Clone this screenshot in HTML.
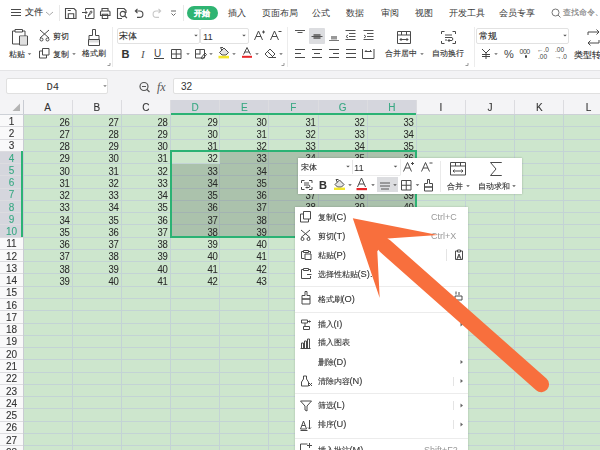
<!DOCTYPE html><html><head><meta charset="utf-8"><style>
*{box-sizing:border-box;margin:0;padding:0}
html,body{width:600px;height:450px;overflow:hidden;background:#fff;font-family:"Liberation Sans",sans-serif;color:#333}
.a{position:absolute}
.t{position:absolute;white-space:nowrap;line-height:1;-webkit-text-stroke:0.1px currentColor}
svg{position:absolute;overflow:visible}
</style></head><body><div style="position:absolute;left:0;top:0;width:600px;height:450px;overflow:hidden;filter:blur(0.45px)"><div class="a" style="left:0px;top:0px;width:600px;height:70px;background:#fff;"></div><div class="a" style="left:0px;top:70px;width:600px;height:30px;background:#f3f3f5;"></div><div class="a" style="left:0px;top:69.5px;width:600px;height:1px;background:#e4e4e6;"></div><div class="a" style="left:5.5px;top:78.2px;width:102px;height:16px;background:#fff;border:1px solid #e0e0e0;border-radius:2px"></div><div class="a" style="left:173px;top:78.2px;width:430px;height:16px;background:#fff;border:1px solid #e0e0e0;border-radius:2px"></div><div class="t" style="left:46.5px;top:82.3px;font-size:10.5px;color:#333;font-family:'Liberation Mono',monospace;-webkit-text-stroke:0">D4</div><div class="t" style="left:181px;top:82px;font-size:10px;color:#333;-webkit-text-stroke:0">32</div><div class="t" style="left:24.5px;top:8px;font-size:9px;color:#333;">文件</div><div class="a" style="left:187px;top:6px;width:31px;height:14px;background:#2fb472;border-radius:7px"></div><div class="t" style="left:194px;top:8.8px;font-size:8.3px;color:#fff;font-weight:bold">开始</div><div class="t" style="left:228px;top:8.9px;font-size:8.6px;color:#3a3a3a;-webkit-text-stroke:0">插入</div><div class="t" style="left:262px;top:8.9px;font-size:8.6px;color:#3a3a3a;-webkit-text-stroke:0">页面布局</div><div class="t" style="left:312px;top:8.9px;font-size:8.6px;color:#3a3a3a;-webkit-text-stroke:0">公式</div><div class="t" style="left:346px;top:8.9px;font-size:8.6px;color:#3a3a3a;-webkit-text-stroke:0">数据</div><div class="t" style="left:381px;top:8.9px;font-size:8.6px;color:#3a3a3a;-webkit-text-stroke:0">审阅</div><div class="t" style="left:415px;top:8.9px;font-size:8.6px;color:#3a3a3a;-webkit-text-stroke:0">视图</div><div class="t" style="left:449px;top:8.9px;font-size:8.6px;color:#3a3a3a;-webkit-text-stroke:0">开发工具</div><div class="t" style="left:499px;top:8.9px;font-size:8.6px;color:#3a3a3a;-webkit-text-stroke:0">会员专享</div><div class="t" style="left:563px;top:9.3px;font-size:8.1px;color:#7a7a7a;-webkit-text-stroke:0.1px #7a7a7a">查找命令、</div><svg style="left:0;top:0" width="600" height="30"><path d="M555.5 12.5m-3.5 0a3.5 3.5 0 1 0 7 0a3.5 3.5 0 1 0-7 0M558 15l2.5 2.5" fill="none" stroke="#777" stroke-width="1"/></svg><div class="t" style="left:9px;top:50.3px;font-size:8.3px;color:#2b2b2b;">粘贴</div><div class="t" style="left:52.8px;top:32px;font-size:8.3px;color:#2b2b2b;">剪切</div><div class="t" style="left:52.8px;top:49.5px;font-size:8.3px;color:#2b2b2b;">复制</div><div class="t" style="left:82px;top:50.3px;font-size:8.2px;color:#2b2b2b;">格式刷</div><div class="a" style="left:117px;top:27.5px;width:83px;height:16px;background:#fff;border:1px solid #e2e2e2;border-radius:2px"></div><div class="a" style="left:200px;top:27.5px;width:48.5px;height:16px;background:#fff;border:1px solid #e2e2e2;border-radius:2px"></div><div class="t" style="left:119px;top:31.5px;font-size:8.5px;color:#2b2b2b;">宋体</div><div class="t" style="left:203px;top:31.5px;font-size:9.5px;color:#333;-webkit-text-stroke:0">11</div><div class="t" style="left:385px;top:50.3px;font-size:8.2px;color:#2b2b2b;">合并居中</div><div class="t" style="left:432px;top:50.3px;font-size:8.2px;color:#2b2b2b;">自动换行</div><div class="a" style="left:476px;top:27.5px;width:93px;height:16px;background:#fff;border:1px solid #e2e2e2;border-radius:2px"></div><div class="t" style="left:479px;top:31.5px;font-size:8.5px;color:#2b2b2b;">常规</div><div class="t" style="left:574px;top:51px;font-size:8.5px;color:#2b2b2b;">类型转换</div><div class="a" style="left:309px;top:27.5px;width:16px;height:16.5px;background:#dcdde0;border-radius:1px"></div><svg style="left:0;top:0" width="600" height="100" viewBox="0 0 600 100" fill="none" stroke="#4a4a4a" stroke-width="1"><path d="M11 9.5h10M11 12.5h10M11 15.5h10" /><path d="M46 12l3.5 3 3.5-3" stroke="#aaa"/><path d="M59.5 5v16M183.5 5v16" stroke="#e8e8e8"/><path d="M65.5 8.5h8.5l2 2v8h-10.5z M67.8 10.5h3 M68.3 18.5v-4.8h5.4v4.8" stroke-width="1.1"/><path d="M85.5 10.5v-2h8.5v10h-8.5v-3.5 M82 12.5h5 M85.5 11l1.5 1.5-1.5 1.5 M88.3 16.5c0-2.2 3.7-2.5 3.7-4.5c0-1.3-1.8-1.3-1.8 0c0 1.5-1.9 1.8-1.9 4.5" /><path d="M102 11v-2.5h6v2.5 M101.5 11h7.5a1 1 0 0 1 1 1v3.5h-9.5v-3.5a1 1 0 0 1 1-1z M102.3 14.2h5.4v4.3h-5.4z" stroke-width="1.1"/><path d="M122 18.5h-4.5v-10h6.5l2 2v2.5 M122.8 14m-2.6 0a2.6 2.6 0 1 0 5.2 0a2.6 2.6 0 1 0-5.2 0 M124.8 16l2.2 2.2" stroke-width="1.1"/><path d="M137.5 8.8l-2.2 2.2 2.2 2.2 M135.5 11h4.2a3.2 3.2 0 0 1 0 6.4h-2.7" stroke-width="1.1"/><path d="M158.5 8.8l2.2 2.2-2.2 2.2 M160.5 11h-4.2a3.2 3.2 0 0 0 0 6.4h2.7" stroke="#c8c8c8" stroke-width="1.1"/><path d="M171 11h5 M171.5 13.5l2 2 2-2" stroke="#666"/><path d="M12.5 31h2.5M22.5 31h2.5v5 M12.5 31v13h6.5 M15 29.5h7.5v2.5h-7.5z M19.5 36h8v9h-8z" /><rect x="20" y="36.5" width="7" height="8" fill="#e0e0e0" stroke="none"/><path d="M27.7 53.3l1.8 1.8 1.8-1.8z" fill="#666" stroke="none"/><path d="M40 30l9 8 M49 30l-9 8 M41.5 39.5m-1.5 0a1.5 1.5 0 1 0 3 0a1.5 1.5 0 1 0-3 0 M47.5 39.5m-1.5 0a1.5 1.5 0 1 0 3 0a1.5 1.5 0 1 0-3 0" /><path d="M42.5 48.5h6.5v6.5h-6.5z M42.5 51h-3v7h7v-3" /><path d="M72.2 53.3l1.8 1.8 1.8-1.8z" fill="#666" stroke="none"/><path d="M92.5 29.5h3v6h3.5v4h-10v-4h3.5z M88.5 39.5h11v6h-11z" /><rect x="89" y="40" width="10" height="2.5" fill="#ddd" stroke="none"/><path d="M107.5 65.5h2.5v-2.5" stroke="#999"/><path d="M281.5 65.5h2.5v-2.5" stroke="#999"/><path d="M465.5 65.5h2.5v-2.5" stroke="#999"/><path d="M112.5 27v40M287.5 27v40M474.5 27v40" stroke="#ececec"/><path d="M194.2 34.8l1.8 1.8 1.8-1.8z M242.2 34.8l1.8 1.8 1.8-1.8z M563.2 34.8l1.8 1.8 1.8-1.8z" fill="#555" stroke="none"/><path d="M254.5 40l4-9 4 9 M256 36.5h5 M262 32h3M263.5 30.5v3" /><path d="M270.5 40l4-9 4 9 M272 36.5h5 M278.5 31.5h3" /><path d="M171.5 49.5h9.5v9h-9.5z M176.25 49.5v9 M171.5 54h9.5" /><path d="M195.5 49.5h9v8.5h-9z M195.5 54h4.5 M200 49.5v5 M201 58l4-5 1.5 1.5-4 4.5z" /><path d="M219.5 52.5l4.5-4.5 4.5 4.5-2.5 2.5h-4z" fill="#e4e4e4"/><path d="M221.8 50.2l-1.3-2.7h2.5" /><rect x="218.5" y="55.8" width="10.5" height="2.6" fill="#f3e62b" stroke="none"/><path d="M243.5 54.5l3.5-7 3.5 7 M244.7 52h4.6" /><rect x="242" y="55.8" width="10" height="2" fill="#e8262a" stroke="none"/><path d="M265 54l5-5 5 5-3.5 3.5h-3z M267.5 51.5l5 5 M269 57.5h7" /><path d="M186.2 53.3l1.8 1.8 1.8-1.8z" fill="#666" stroke="none"/><path d="M209.2 53.3l1.8 1.8 1.8-1.8z" fill="#666" stroke="none"/><path d="M232.2 53.3l1.8 1.8 1.8-1.8z" fill="#666" stroke="none"/><path d="M255.2 53.3l1.8 1.8 1.8-1.8z" fill="#666" stroke="none"/><path d="M279.2 53.3l1.8 1.8 1.8-1.8z" fill="#666" stroke="none"/><path d="M295 30.5h10M297.5 32.5h5" stroke="#555"/><rect x="313.5" y="34" width="7" height="5" fill="#777" stroke="none"/><path d="M311.5 36.5h11" stroke="#555"/><rect x="331" y="36" width="6" height="3.5" fill="#999" stroke="none"/><path d="M329 40.5h10" stroke="#777"/><path d="M345.5 30.5h10M349 33.5h6.5M349 36.5h6.5M345.5 39.5h10 M348 35l-2 1.5 2 1.5" stroke="#555"/><path d="M363.5 30.5h10M367 33.5h6.5M367 36.5h6.5M363.5 39.5h10 M364 35l2 1.5-2 1.5" stroke="#555"/><path d="M295 49.5h10M295 53.5h6M295 57.5h10" /><path d="M312 49.5h10M314 53.5h6M312 57.5h10" /><path d="M329 49.5h10M333 53.5h6M329 57.5h10" /><path d="M346 49.5h10M346 53.5h10M346 57.5h10" /><path d="M362.5 49v9.5h11.5V49 M365 51.5h6.5 M365 51.5l1.5-1.5M371.5 51.5l-1.5-1.5" /><path d="M397.5 31.5h13v12h-13z M397.5 35h13 M401.5 31.5v3.5M406.5 31.5v3.5 M400 39.5h8 M401.5 38l-1.5 1.5 1.5 1.5M406.5 38l1.5 1.5-1.5 1.5" /><path d="M420.2 53.3l1.8 1.8 1.8-1.8z" fill="#666" stroke="none"/><path d="M441.5 34v-2.5h3 M452.5 31.5h3v2.5 M441.5 41v2.5h3 M452.5 43.5h3v-2.5 M445 35h7 M445 37.5h7c1 0 1 3 0 3h-4 M449.5 39l-1.5 1.5 1.5 1.5 M445 40h2" /><path d="M482 49l4 4 4-4 M486 53v6 M482 54.5h8 M482 56.5h8" stroke="#444"/><path d="M494.2 53.3l1.8 1.8 1.8-1.8z" fill="#666" stroke="none"/><path d="M588 35v-3h11 M596.5 29.5l2.5 2.5-2.5 2.5 M599 40v3h-11 M590.5 45.5l-2.5-2.5 2.5-2.5" /><path d="M144 86.5m-4 0a4 4 0 1 0 8 0a4 4 0 1 0-8 0 M147 89.5l2.5 2.5 M142 86.5h4" stroke="#555" stroke-width="1.2"/><path d="M103.2 85.3l1.8 1.8 1.8-1.8z" fill="#777" stroke="none"/></svg><div class="t" style="left:121.5px;top:49px;font-size:11px;color:#333;font-weight:bold">B</div><div class="t" style="left:141px;top:49px;font-size:11px;color:#555;font-style:italic;font-family:'Liberation Serif',serif;-webkit-text-stroke:0">I</div><div class="t" style="left:154px;top:48.5px;font-size:10px;color:#444;-webkit-text-stroke:0">U</div><div class="a" style="left:154px;top:58px;width:10px;height:1px;background:#444;"></div><div class="t" style="left:504px;top:49px;font-size:11px;color:#444;-webkit-text-stroke:0">%</div><div class="a" style="left:525.3px;top:54.5px;width:1.3px;height:3px;background:#444;border-radius:1px"></div><div class="t" style="left:519.5px;top:47.5px;font-size:7px;color:#444;letter-spacing:-0.5px;-webkit-text-stroke:0">000</div><div class="t" style="left:537px;top:47px;font-size:6.5px;color:#444;-webkit-text-stroke:0">←.0</div><div class="t" style="left:538px;top:53.5px;font-size:6.5px;color:#444;-webkit-text-stroke:0">.00</div><div class="t" style="left:555px;top:47px;font-size:6.5px;color:#444;-webkit-text-stroke:0">.00</div><div class="t" style="left:555px;top:53.5px;font-size:6.5px;color:#444;-webkit-text-stroke:0">→.0</div><div class="t" style="left:157px;top:81px;font-size:12px;color:#555;font-family:'Liberation Serif',serif;-webkit-text-stroke:0"><i>fx</i></div><div class="a" style="left:0px;top:99.5px;width:600px;height:15.2px;background:#f4f4f6;"></div><div class="a" style="left:0px;top:114.7px;width:23px;height:340px;background:#f9f9fa;"></div><div class="a" style="left:23px;top:114.7px;width:580px;height:340px;background:#cde6cd;"></div><div class="a" style="left:170.51px;top:99.5px;width:245.85000000000002px;height:15.2px;background:#d5d6dd;"></div><div class="a" style="left:0px;top:151.38px;width:23px;height:85.82px;background:#d5d6dd;"></div><div class="a" style="left:22.50px;top:99.5px;width:1px;height:15.2px;background:#dcdce0"></div><div class="a" style="left:22.50px;top:114.7px;width:1px;height:340px;background:#c3d3d5"></div><div class="a" style="left:71.67px;top:99.5px;width:1px;height:15.2px;background:#dcdce0"></div><div class="a" style="left:71.67px;top:114.7px;width:1px;height:340px;background:#c3d3d5"></div><div class="a" style="left:120.84px;top:99.5px;width:1px;height:15.2px;background:#dcdce0"></div><div class="a" style="left:120.84px;top:114.7px;width:1px;height:340px;background:#c3d3d5"></div><div class="a" style="left:170.01px;top:99.5px;width:1px;height:15.2px;background:#dcdce0"></div><div class="a" style="left:170.01px;top:114.7px;width:1px;height:340px;background:#c3d3d5"></div><div class="a" style="left:219.18px;top:99.5px;width:1px;height:15.2px;background:#dcdce0"></div><div class="a" style="left:219.18px;top:114.7px;width:1px;height:340px;background:#c3d3d5"></div><div class="a" style="left:268.35px;top:99.5px;width:1px;height:15.2px;background:#dcdce0"></div><div class="a" style="left:268.35px;top:114.7px;width:1px;height:340px;background:#c3d3d5"></div><div class="a" style="left:317.52px;top:99.5px;width:1px;height:15.2px;background:#dcdce0"></div><div class="a" style="left:317.52px;top:114.7px;width:1px;height:340px;background:#c3d3d5"></div><div class="a" style="left:366.69px;top:99.5px;width:1px;height:15.2px;background:#dcdce0"></div><div class="a" style="left:366.69px;top:114.7px;width:1px;height:340px;background:#c3d3d5"></div><div class="a" style="left:415.86px;top:99.5px;width:1px;height:15.2px;background:#dcdce0"></div><div class="a" style="left:415.86px;top:114.7px;width:1px;height:340px;background:#c3d3d5"></div><div class="a" style="left:465.03px;top:99.5px;width:1px;height:15.2px;background:#dcdce0"></div><div class="a" style="left:465.03px;top:114.7px;width:1px;height:340px;background:#c3d3d5"></div><div class="a" style="left:514.20px;top:99.5px;width:1px;height:15.2px;background:#dcdce0"></div><div class="a" style="left:514.20px;top:114.7px;width:1px;height:340px;background:#c3d3d5"></div><div class="a" style="left:563.37px;top:99.5px;width:1px;height:15.2px;background:#dcdce0"></div><div class="a" style="left:563.37px;top:114.7px;width:1px;height:340px;background:#c3d3d5"></div><div class="a" style="left:612.54px;top:99.5px;width:1px;height:15.2px;background:#dcdce0"></div><div class="a" style="left:612.54px;top:114.7px;width:1px;height:340px;background:#c3d3d5"></div><div class="a" style="left:23px;top:114.10px;width:580px;height:1px;background:#c3d3d5"></div><div class="a" style="left:0px;top:114.10px;width:23px;height:1px;background:#dcdce0"></div><div class="a" style="left:23px;top:126.36px;width:580px;height:1px;background:#c3d3d5"></div><div class="a" style="left:0px;top:126.36px;width:23px;height:1px;background:#dcdce0"></div><div class="a" style="left:23px;top:138.62px;width:580px;height:1px;background:#c3d3d5"></div><div class="a" style="left:0px;top:138.62px;width:23px;height:1px;background:#dcdce0"></div><div class="a" style="left:23px;top:150.88px;width:580px;height:1px;background:#c3d3d5"></div><div class="a" style="left:0px;top:150.88px;width:23px;height:1px;background:#dcdce0"></div><div class="a" style="left:23px;top:163.14px;width:580px;height:1px;background:#c3d3d5"></div><div class="a" style="left:0px;top:163.14px;width:23px;height:1px;background:#dcdce0"></div><div class="a" style="left:23px;top:175.40px;width:580px;height:1px;background:#c3d3d5"></div><div class="a" style="left:0px;top:175.40px;width:23px;height:1px;background:#dcdce0"></div><div class="a" style="left:23px;top:187.66px;width:580px;height:1px;background:#c3d3d5"></div><div class="a" style="left:0px;top:187.66px;width:23px;height:1px;background:#dcdce0"></div><div class="a" style="left:23px;top:199.92px;width:580px;height:1px;background:#c3d3d5"></div><div class="a" style="left:0px;top:199.92px;width:23px;height:1px;background:#dcdce0"></div><div class="a" style="left:23px;top:212.18px;width:580px;height:1px;background:#c3d3d5"></div><div class="a" style="left:0px;top:212.18px;width:23px;height:1px;background:#dcdce0"></div><div class="a" style="left:23px;top:224.44px;width:580px;height:1px;background:#c3d3d5"></div><div class="a" style="left:0px;top:224.44px;width:23px;height:1px;background:#dcdce0"></div><div class="a" style="left:23px;top:236.70px;width:580px;height:1px;background:#c3d3d5"></div><div class="a" style="left:0px;top:236.70px;width:23px;height:1px;background:#dcdce0"></div><div class="a" style="left:23px;top:248.96px;width:580px;height:1px;background:#c3d3d5"></div><div class="a" style="left:0px;top:248.96px;width:23px;height:1px;background:#dcdce0"></div><div class="a" style="left:23px;top:261.22px;width:580px;height:1px;background:#c3d3d5"></div><div class="a" style="left:0px;top:261.22px;width:23px;height:1px;background:#dcdce0"></div><div class="a" style="left:23px;top:273.48px;width:580px;height:1px;background:#c3d3d5"></div><div class="a" style="left:0px;top:273.48px;width:23px;height:1px;background:#dcdce0"></div><div class="a" style="left:23px;top:285.74px;width:580px;height:1px;background:#c3d3d5"></div><div class="a" style="left:0px;top:285.74px;width:23px;height:1px;background:#dcdce0"></div><div class="a" style="left:23px;top:298.00px;width:580px;height:1px;background:#c3d3d5"></div><div class="a" style="left:0px;top:298.00px;width:23px;height:1px;background:#dcdce0"></div><div class="a" style="left:23px;top:310.26px;width:580px;height:1px;background:#c3d3d5"></div><div class="a" style="left:0px;top:310.26px;width:23px;height:1px;background:#dcdce0"></div><div class="a" style="left:23px;top:322.52px;width:580px;height:1px;background:#c3d3d5"></div><div class="a" style="left:0px;top:322.52px;width:23px;height:1px;background:#dcdce0"></div><div class="a" style="left:23px;top:334.78px;width:580px;height:1px;background:#c3d3d5"></div><div class="a" style="left:0px;top:334.78px;width:23px;height:1px;background:#dcdce0"></div><div class="a" style="left:23px;top:347.04px;width:580px;height:1px;background:#c3d3d5"></div><div class="a" style="left:0px;top:347.04px;width:23px;height:1px;background:#dcdce0"></div><div class="a" style="left:23px;top:359.30px;width:580px;height:1px;background:#c3d3d5"></div><div class="a" style="left:0px;top:359.30px;width:23px;height:1px;background:#dcdce0"></div><div class="a" style="left:23px;top:371.56px;width:580px;height:1px;background:#c3d3d5"></div><div class="a" style="left:0px;top:371.56px;width:23px;height:1px;background:#dcdce0"></div><div class="a" style="left:23px;top:383.82px;width:580px;height:1px;background:#c3d3d5"></div><div class="a" style="left:0px;top:383.82px;width:23px;height:1px;background:#dcdce0"></div><div class="a" style="left:23px;top:396.08px;width:580px;height:1px;background:#c3d3d5"></div><div class="a" style="left:0px;top:396.08px;width:23px;height:1px;background:#dcdce0"></div><div class="a" style="left:23px;top:408.34px;width:580px;height:1px;background:#c3d3d5"></div><div class="a" style="left:0px;top:408.34px;width:23px;height:1px;background:#dcdce0"></div><div class="a" style="left:23px;top:420.60px;width:580px;height:1px;background:#c3d3d5"></div><div class="a" style="left:0px;top:420.60px;width:23px;height:1px;background:#dcdce0"></div><div class="a" style="left:23px;top:432.86px;width:580px;height:1px;background:#c3d3d5"></div><div class="a" style="left:0px;top:432.86px;width:23px;height:1px;background:#dcdce0"></div><div class="a" style="left:23px;top:445.12px;width:580px;height:1px;background:#c3d3d5"></div><div class="a" style="left:0px;top:445.12px;width:23px;height:1px;background:#dcdce0"></div><div class="a" style="left:23px;top:457.38px;width:580px;height:1px;background:#c3d3d5"></div><div class="a" style="left:0px;top:457.38px;width:23px;height:1px;background:#dcdce0"></div><div class="a" style="left:219.68px;top:151.38px;width:196.68px;height:12.259999999999991px;background:rgba(50,70,55,0.22);"></div><div class="a" style="left:170.51px;top:163.64px;width:245.85000000000002px;height:73.56px;background:rgba(50,70,55,0.22);"></div><div class="a" style="left:22.5px;top:99.5px;width:1px;height:360px;background:#c9ccd3;"></div><div class="a" style="left:0px;top:114.2px;width:600px;height:1px;background:#cdd1d7;"></div><svg style="left:0;top:0" width="30" height="120"><path d="M12.5 111h7.5v-7.5z" fill="#b4b4b4"/></svg><div class="t" style="left:23.00px;top:103px;width:49.17px;text-align:center;font-size:10px;color:#333">A</div><div class="t" style="left:72.17px;top:103px;width:49.17px;text-align:center;font-size:10px;color:#333">B</div><div class="t" style="left:121.34px;top:103px;width:49.17px;text-align:center;font-size:10px;color:#333">C</div><div class="t" style="left:170.51px;top:103px;width:49.17px;text-align:center;font-size:10px;color:#38a883">D</div><div class="t" style="left:219.68px;top:103px;width:49.17px;text-align:center;font-size:10px;color:#38a883">E</div><div class="t" style="left:268.85px;top:103px;width:49.17px;text-align:center;font-size:10px;color:#38a883">F</div><div class="t" style="left:318.02px;top:103px;width:49.17px;text-align:center;font-size:10px;color:#38a883">G</div><div class="t" style="left:367.19px;top:103px;width:49.17px;text-align:center;font-size:10px;color:#38a883">H</div><div class="t" style="left:416.36px;top:103px;width:49.17px;text-align:center;font-size:10px;color:#333">I</div><div class="t" style="left:465.53px;top:103px;width:49.17px;text-align:center;font-size:10px;color:#333">J</div><div class="t" style="left:514.70px;top:103px;width:49.17px;text-align:center;font-size:10px;color:#333">K</div><div class="t" style="left:563.87px;top:103px;width:49.17px;text-align:center;font-size:10px;color:#333">L</div><div class="t" style="left:0;top:116.80px;width:23px;text-align:center;font-size:10px;color:#333">1</div><div class="t" style="left:0;top:129.06px;width:23px;text-align:center;font-size:10px;color:#333">2</div><div class="t" style="left:0;top:141.32px;width:23px;text-align:center;font-size:10px;color:#333">3</div><div class="t" style="left:0;top:153.58px;width:23px;text-align:center;font-size:10px;color:#38a883">4</div><div class="t" style="left:0;top:165.84px;width:23px;text-align:center;font-size:10px;color:#38a883">5</div><div class="t" style="left:0;top:178.10px;width:23px;text-align:center;font-size:10px;color:#38a883">6</div><div class="t" style="left:0;top:190.36px;width:23px;text-align:center;font-size:10px;color:#38a883">7</div><div class="t" style="left:0;top:202.62px;width:23px;text-align:center;font-size:10px;color:#38a883">8</div><div class="t" style="left:0;top:214.88px;width:23px;text-align:center;font-size:10px;color:#38a883">9</div><div class="t" style="left:0;top:227.14px;width:23px;text-align:center;font-size:10px;color:#38a883">10</div><div class="t" style="left:0;top:239.40px;width:23px;text-align:center;font-size:10px;color:#333">11</div><div class="t" style="left:0;top:251.66px;width:23px;text-align:center;font-size:10px;color:#333">12</div><div class="t" style="left:0;top:263.92px;width:23px;text-align:center;font-size:10px;color:#333">13</div><div class="t" style="left:0;top:276.18px;width:23px;text-align:center;font-size:10px;color:#333">14</div><div class="t" style="left:0;top:288.44px;width:23px;text-align:center;font-size:10px;color:#333">15</div><div class="t" style="left:0;top:300.70px;width:23px;text-align:center;font-size:10px;color:#333">16</div><div class="t" style="left:0;top:312.96px;width:23px;text-align:center;font-size:10px;color:#333">17</div><div class="t" style="left:0;top:325.22px;width:23px;text-align:center;font-size:10px;color:#333">18</div><div class="t" style="left:0;top:337.48px;width:23px;text-align:center;font-size:10px;color:#333">19</div><div class="t" style="left:0;top:349.74px;width:23px;text-align:center;font-size:10px;color:#333">20</div><div class="t" style="left:0;top:362.00px;width:23px;text-align:center;font-size:10px;color:#333">21</div><div class="t" style="left:0;top:374.26px;width:23px;text-align:center;font-size:10px;color:#333">22</div><div class="t" style="left:0;top:386.52px;width:23px;text-align:center;font-size:10px;color:#333">23</div><div class="t" style="left:0;top:398.78px;width:23px;text-align:center;font-size:10px;color:#333">24</div><div class="t" style="left:0;top:411.04px;width:23px;text-align:center;font-size:10px;color:#333">25</div><div class="t" style="left:0;top:423.30px;width:23px;text-align:center;font-size:10px;color:#333">26</div><div class="t" style="left:0;top:435.56px;width:23px;text-align:center;font-size:10px;color:#333">27</div><div class="t" style="left:0;top:447.82px;width:23px;text-align:center;font-size:10px;color:#333">28</div><div class="t" style="left:23.00px;top:116.60px;width:46.67px;text-align:right;font-size:10.6px;transform:scaleX(0.9);transform-origin:100% 0;color:#2a2a2a;letter-spacing:-0.2px;-webkit-text-stroke:0.05px currentColor">26</div><div class="t" style="left:72.17px;top:116.60px;width:46.67px;text-align:right;font-size:10.6px;transform:scaleX(0.9);transform-origin:100% 0;color:#2a2a2a;letter-spacing:-0.2px;-webkit-text-stroke:0.05px currentColor">27</div><div class="t" style="left:121.34px;top:116.60px;width:46.67px;text-align:right;font-size:10.6px;transform:scaleX(0.9);transform-origin:100% 0;color:#2a2a2a;letter-spacing:-0.2px;-webkit-text-stroke:0.05px currentColor">28</div><div class="t" style="left:170.51px;top:116.60px;width:46.67px;text-align:right;font-size:10.6px;transform:scaleX(0.9);transform-origin:100% 0;color:#2a2a2a;letter-spacing:-0.2px;-webkit-text-stroke:0.05px currentColor">29</div><div class="t" style="left:219.68px;top:116.60px;width:46.67px;text-align:right;font-size:10.6px;transform:scaleX(0.9);transform-origin:100% 0;color:#2a2a2a;letter-spacing:-0.2px;-webkit-text-stroke:0.05px currentColor">30</div><div class="t" style="left:268.85px;top:116.60px;width:46.67px;text-align:right;font-size:10.6px;transform:scaleX(0.9);transform-origin:100% 0;color:#2a2a2a;letter-spacing:-0.2px;-webkit-text-stroke:0.05px currentColor">31</div><div class="t" style="left:318.02px;top:116.60px;width:46.67px;text-align:right;font-size:10.6px;transform:scaleX(0.9);transform-origin:100% 0;color:#2a2a2a;letter-spacing:-0.2px;-webkit-text-stroke:0.05px currentColor">32</div><div class="t" style="left:367.19px;top:116.60px;width:46.67px;text-align:right;font-size:10.6px;transform:scaleX(0.9);transform-origin:100% 0;color:#2a2a2a;letter-spacing:-0.2px;-webkit-text-stroke:0.05px currentColor">33</div><div class="t" style="left:23.00px;top:128.86px;width:46.67px;text-align:right;font-size:10.6px;transform:scaleX(0.9);transform-origin:100% 0;color:#2a2a2a;letter-spacing:-0.2px;-webkit-text-stroke:0.05px currentColor">27</div><div class="t" style="left:72.17px;top:128.86px;width:46.67px;text-align:right;font-size:10.6px;transform:scaleX(0.9);transform-origin:100% 0;color:#2a2a2a;letter-spacing:-0.2px;-webkit-text-stroke:0.05px currentColor">28</div><div class="t" style="left:121.34px;top:128.86px;width:46.67px;text-align:right;font-size:10.6px;transform:scaleX(0.9);transform-origin:100% 0;color:#2a2a2a;letter-spacing:-0.2px;-webkit-text-stroke:0.05px currentColor">29</div><div class="t" style="left:170.51px;top:128.86px;width:46.67px;text-align:right;font-size:10.6px;transform:scaleX(0.9);transform-origin:100% 0;color:#2a2a2a;letter-spacing:-0.2px;-webkit-text-stroke:0.05px currentColor">30</div><div class="t" style="left:219.68px;top:128.86px;width:46.67px;text-align:right;font-size:10.6px;transform:scaleX(0.9);transform-origin:100% 0;color:#2a2a2a;letter-spacing:-0.2px;-webkit-text-stroke:0.05px currentColor">31</div><div class="t" style="left:268.85px;top:128.86px;width:46.67px;text-align:right;font-size:10.6px;transform:scaleX(0.9);transform-origin:100% 0;color:#2a2a2a;letter-spacing:-0.2px;-webkit-text-stroke:0.05px currentColor">32</div><div class="t" style="left:318.02px;top:128.86px;width:46.67px;text-align:right;font-size:10.6px;transform:scaleX(0.9);transform-origin:100% 0;color:#2a2a2a;letter-spacing:-0.2px;-webkit-text-stroke:0.05px currentColor">33</div><div class="t" style="left:367.19px;top:128.86px;width:46.67px;text-align:right;font-size:10.6px;transform:scaleX(0.9);transform-origin:100% 0;color:#2a2a2a;letter-spacing:-0.2px;-webkit-text-stroke:0.05px currentColor">34</div><div class="t" style="left:23.00px;top:141.12px;width:46.67px;text-align:right;font-size:10.6px;transform:scaleX(0.9);transform-origin:100% 0;color:#2a2a2a;letter-spacing:-0.2px;-webkit-text-stroke:0.05px currentColor">28</div><div class="t" style="left:72.17px;top:141.12px;width:46.67px;text-align:right;font-size:10.6px;transform:scaleX(0.9);transform-origin:100% 0;color:#2a2a2a;letter-spacing:-0.2px;-webkit-text-stroke:0.05px currentColor">29</div><div class="t" style="left:121.34px;top:141.12px;width:46.67px;text-align:right;font-size:10.6px;transform:scaleX(0.9);transform-origin:100% 0;color:#2a2a2a;letter-spacing:-0.2px;-webkit-text-stroke:0.05px currentColor">30</div><div class="t" style="left:170.51px;top:141.12px;width:46.67px;text-align:right;font-size:10.6px;transform:scaleX(0.9);transform-origin:100% 0;color:#2a2a2a;letter-spacing:-0.2px;-webkit-text-stroke:0.05px currentColor">31</div><div class="t" style="left:219.68px;top:141.12px;width:46.67px;text-align:right;font-size:10.6px;transform:scaleX(0.9);transform-origin:100% 0;color:#2a2a2a;letter-spacing:-0.2px;-webkit-text-stroke:0.05px currentColor">32</div><div class="t" style="left:268.85px;top:141.12px;width:46.67px;text-align:right;font-size:10.6px;transform:scaleX(0.9);transform-origin:100% 0;color:#2a2a2a;letter-spacing:-0.2px;-webkit-text-stroke:0.05px currentColor">33</div><div class="t" style="left:318.02px;top:141.12px;width:46.67px;text-align:right;font-size:10.6px;transform:scaleX(0.9);transform-origin:100% 0;color:#2a2a2a;letter-spacing:-0.2px;-webkit-text-stroke:0.05px currentColor">34</div><div class="t" style="left:367.19px;top:141.12px;width:46.67px;text-align:right;font-size:10.6px;transform:scaleX(0.9);transform-origin:100% 0;color:#2a2a2a;letter-spacing:-0.2px;-webkit-text-stroke:0.05px currentColor">35</div><div class="t" style="left:23.00px;top:153.38px;width:46.67px;text-align:right;font-size:10.6px;transform:scaleX(0.9);transform-origin:100% 0;color:#2a2a2a;letter-spacing:-0.2px;-webkit-text-stroke:0.05px currentColor">29</div><div class="t" style="left:72.17px;top:153.38px;width:46.67px;text-align:right;font-size:10.6px;transform:scaleX(0.9);transform-origin:100% 0;color:#2a2a2a;letter-spacing:-0.2px;-webkit-text-stroke:0.05px currentColor">30</div><div class="t" style="left:121.34px;top:153.38px;width:46.67px;text-align:right;font-size:10.6px;transform:scaleX(0.9);transform-origin:100% 0;color:#2a2a2a;letter-spacing:-0.2px;-webkit-text-stroke:0.05px currentColor">31</div><div class="t" style="left:170.51px;top:153.38px;width:46.67px;text-align:right;font-size:10.6px;transform:scaleX(0.9);transform-origin:100% 0;color:#2a2a2a;letter-spacing:-0.2px;-webkit-text-stroke:0.05px currentColor">32</div><div class="t" style="left:219.68px;top:153.38px;width:46.67px;text-align:right;font-size:10.6px;transform:scaleX(0.9);transform-origin:100% 0;color:#2a2a2a;letter-spacing:-0.2px;-webkit-text-stroke:0.05px currentColor">33</div><div class="t" style="left:268.85px;top:153.38px;width:46.67px;text-align:right;font-size:10.6px;transform:scaleX(0.9);transform-origin:100% 0;color:#2a2a2a;letter-spacing:-0.2px;-webkit-text-stroke:0.05px currentColor">34</div><div class="t" style="left:318.02px;top:153.38px;width:46.67px;text-align:right;font-size:10.6px;transform:scaleX(0.9);transform-origin:100% 0;color:#2a2a2a;letter-spacing:-0.2px;-webkit-text-stroke:0.05px currentColor">35</div><div class="t" style="left:367.19px;top:153.38px;width:46.67px;text-align:right;font-size:10.6px;transform:scaleX(0.9);transform-origin:100% 0;color:#2a2a2a;letter-spacing:-0.2px;-webkit-text-stroke:0.05px currentColor">36</div><div class="t" style="left:23.00px;top:165.64px;width:46.67px;text-align:right;font-size:10.6px;transform:scaleX(0.9);transform-origin:100% 0;color:#2a2a2a;letter-spacing:-0.2px;-webkit-text-stroke:0.05px currentColor">30</div><div class="t" style="left:72.17px;top:165.64px;width:46.67px;text-align:right;font-size:10.6px;transform:scaleX(0.9);transform-origin:100% 0;color:#2a2a2a;letter-spacing:-0.2px;-webkit-text-stroke:0.05px currentColor">31</div><div class="t" style="left:121.34px;top:165.64px;width:46.67px;text-align:right;font-size:10.6px;transform:scaleX(0.9);transform-origin:100% 0;color:#2a2a2a;letter-spacing:-0.2px;-webkit-text-stroke:0.05px currentColor">32</div><div class="t" style="left:170.51px;top:165.64px;width:46.67px;text-align:right;font-size:10.6px;transform:scaleX(0.9);transform-origin:100% 0;color:#2a2a2a;letter-spacing:-0.2px;-webkit-text-stroke:0.05px currentColor">33</div><div class="t" style="left:219.68px;top:165.64px;width:46.67px;text-align:right;font-size:10.6px;transform:scaleX(0.9);transform-origin:100% 0;color:#2a2a2a;letter-spacing:-0.2px;-webkit-text-stroke:0.05px currentColor">34</div><div class="t" style="left:268.85px;top:165.64px;width:46.67px;text-align:right;font-size:10.6px;transform:scaleX(0.9);transform-origin:100% 0;color:#2a2a2a;letter-spacing:-0.2px;-webkit-text-stroke:0.05px currentColor">35</div><div class="t" style="left:318.02px;top:165.64px;width:46.67px;text-align:right;font-size:10.6px;transform:scaleX(0.9);transform-origin:100% 0;color:#2a2a2a;letter-spacing:-0.2px;-webkit-text-stroke:0.05px currentColor">36</div><div class="t" style="left:367.19px;top:165.64px;width:46.67px;text-align:right;font-size:10.6px;transform:scaleX(0.9);transform-origin:100% 0;color:#2a2a2a;letter-spacing:-0.2px;-webkit-text-stroke:0.05px currentColor">37</div><div class="t" style="left:23.00px;top:177.90px;width:46.67px;text-align:right;font-size:10.6px;transform:scaleX(0.9);transform-origin:100% 0;color:#2a2a2a;letter-spacing:-0.2px;-webkit-text-stroke:0.05px currentColor">31</div><div class="t" style="left:72.17px;top:177.90px;width:46.67px;text-align:right;font-size:10.6px;transform:scaleX(0.9);transform-origin:100% 0;color:#2a2a2a;letter-spacing:-0.2px;-webkit-text-stroke:0.05px currentColor">32</div><div class="t" style="left:121.34px;top:177.90px;width:46.67px;text-align:right;font-size:10.6px;transform:scaleX(0.9);transform-origin:100% 0;color:#2a2a2a;letter-spacing:-0.2px;-webkit-text-stroke:0.05px currentColor">33</div><div class="t" style="left:170.51px;top:177.90px;width:46.67px;text-align:right;font-size:10.6px;transform:scaleX(0.9);transform-origin:100% 0;color:#2a2a2a;letter-spacing:-0.2px;-webkit-text-stroke:0.05px currentColor">34</div><div class="t" style="left:219.68px;top:177.90px;width:46.67px;text-align:right;font-size:10.6px;transform:scaleX(0.9);transform-origin:100% 0;color:#2a2a2a;letter-spacing:-0.2px;-webkit-text-stroke:0.05px currentColor">35</div><div class="t" style="left:268.85px;top:177.90px;width:46.67px;text-align:right;font-size:10.6px;transform:scaleX(0.9);transform-origin:100% 0;color:#2a2a2a;letter-spacing:-0.2px;-webkit-text-stroke:0.05px currentColor">36</div><div class="t" style="left:318.02px;top:177.90px;width:46.67px;text-align:right;font-size:10.6px;transform:scaleX(0.9);transform-origin:100% 0;color:#2a2a2a;letter-spacing:-0.2px;-webkit-text-stroke:0.05px currentColor">37</div><div class="t" style="left:367.19px;top:177.90px;width:46.67px;text-align:right;font-size:10.6px;transform:scaleX(0.9);transform-origin:100% 0;color:#2a2a2a;letter-spacing:-0.2px;-webkit-text-stroke:0.05px currentColor">38</div><div class="t" style="left:23.00px;top:190.16px;width:46.67px;text-align:right;font-size:10.6px;transform:scaleX(0.9);transform-origin:100% 0;color:#2a2a2a;letter-spacing:-0.2px;-webkit-text-stroke:0.05px currentColor">32</div><div class="t" style="left:72.17px;top:190.16px;width:46.67px;text-align:right;font-size:10.6px;transform:scaleX(0.9);transform-origin:100% 0;color:#2a2a2a;letter-spacing:-0.2px;-webkit-text-stroke:0.05px currentColor">33</div><div class="t" style="left:121.34px;top:190.16px;width:46.67px;text-align:right;font-size:10.6px;transform:scaleX(0.9);transform-origin:100% 0;color:#2a2a2a;letter-spacing:-0.2px;-webkit-text-stroke:0.05px currentColor">34</div><div class="t" style="left:170.51px;top:190.16px;width:46.67px;text-align:right;font-size:10.6px;transform:scaleX(0.9);transform-origin:100% 0;color:#2a2a2a;letter-spacing:-0.2px;-webkit-text-stroke:0.05px currentColor">35</div><div class="t" style="left:219.68px;top:190.16px;width:46.67px;text-align:right;font-size:10.6px;transform:scaleX(0.9);transform-origin:100% 0;color:#2a2a2a;letter-spacing:-0.2px;-webkit-text-stroke:0.05px currentColor">36</div><div class="t" style="left:268.85px;top:190.16px;width:46.67px;text-align:right;font-size:10.6px;transform:scaleX(0.9);transform-origin:100% 0;color:#2a2a2a;letter-spacing:-0.2px;-webkit-text-stroke:0.05px currentColor">37</div><div class="t" style="left:318.02px;top:190.16px;width:46.67px;text-align:right;font-size:10.6px;transform:scaleX(0.9);transform-origin:100% 0;color:#2a2a2a;letter-spacing:-0.2px;-webkit-text-stroke:0.05px currentColor">38</div><div class="t" style="left:367.19px;top:190.16px;width:46.67px;text-align:right;font-size:10.6px;transform:scaleX(0.9);transform-origin:100% 0;color:#2a2a2a;letter-spacing:-0.2px;-webkit-text-stroke:0.05px currentColor">39</div><div class="t" style="left:23.00px;top:202.42px;width:46.67px;text-align:right;font-size:10.6px;transform:scaleX(0.9);transform-origin:100% 0;color:#2a2a2a;letter-spacing:-0.2px;-webkit-text-stroke:0.05px currentColor">33</div><div class="t" style="left:72.17px;top:202.42px;width:46.67px;text-align:right;font-size:10.6px;transform:scaleX(0.9);transform-origin:100% 0;color:#2a2a2a;letter-spacing:-0.2px;-webkit-text-stroke:0.05px currentColor">34</div><div class="t" style="left:121.34px;top:202.42px;width:46.67px;text-align:right;font-size:10.6px;transform:scaleX(0.9);transform-origin:100% 0;color:#2a2a2a;letter-spacing:-0.2px;-webkit-text-stroke:0.05px currentColor">35</div><div class="t" style="left:170.51px;top:202.42px;width:46.67px;text-align:right;font-size:10.6px;transform:scaleX(0.9);transform-origin:100% 0;color:#2a2a2a;letter-spacing:-0.2px;-webkit-text-stroke:0.05px currentColor">36</div><div class="t" style="left:219.68px;top:202.42px;width:46.67px;text-align:right;font-size:10.6px;transform:scaleX(0.9);transform-origin:100% 0;color:#2a2a2a;letter-spacing:-0.2px;-webkit-text-stroke:0.05px currentColor">37</div><div class="t" style="left:268.85px;top:202.42px;width:46.67px;text-align:right;font-size:10.6px;transform:scaleX(0.9);transform-origin:100% 0;color:#2a2a2a;letter-spacing:-0.2px;-webkit-text-stroke:0.05px currentColor">38</div><div class="t" style="left:318.02px;top:202.42px;width:46.67px;text-align:right;font-size:10.6px;transform:scaleX(0.9);transform-origin:100% 0;color:#2a2a2a;letter-spacing:-0.2px;-webkit-text-stroke:0.05px currentColor">39</div><div class="t" style="left:367.19px;top:202.42px;width:46.67px;text-align:right;font-size:10.6px;transform:scaleX(0.9);transform-origin:100% 0;color:#2a2a2a;letter-spacing:-0.2px;-webkit-text-stroke:0.05px currentColor">40</div><div class="t" style="left:23.00px;top:214.68px;width:46.67px;text-align:right;font-size:10.6px;transform:scaleX(0.9);transform-origin:100% 0;color:#2a2a2a;letter-spacing:-0.2px;-webkit-text-stroke:0.05px currentColor">34</div><div class="t" style="left:72.17px;top:214.68px;width:46.67px;text-align:right;font-size:10.6px;transform:scaleX(0.9);transform-origin:100% 0;color:#2a2a2a;letter-spacing:-0.2px;-webkit-text-stroke:0.05px currentColor">35</div><div class="t" style="left:121.34px;top:214.68px;width:46.67px;text-align:right;font-size:10.6px;transform:scaleX(0.9);transform-origin:100% 0;color:#2a2a2a;letter-spacing:-0.2px;-webkit-text-stroke:0.05px currentColor">36</div><div class="t" style="left:170.51px;top:214.68px;width:46.67px;text-align:right;font-size:10.6px;transform:scaleX(0.9);transform-origin:100% 0;color:#2a2a2a;letter-spacing:-0.2px;-webkit-text-stroke:0.05px currentColor">37</div><div class="t" style="left:219.68px;top:214.68px;width:46.67px;text-align:right;font-size:10.6px;transform:scaleX(0.9);transform-origin:100% 0;color:#2a2a2a;letter-spacing:-0.2px;-webkit-text-stroke:0.05px currentColor">38</div><div class="t" style="left:268.85px;top:214.68px;width:46.67px;text-align:right;font-size:10.6px;transform:scaleX(0.9);transform-origin:100% 0;color:#2a2a2a;letter-spacing:-0.2px;-webkit-text-stroke:0.05px currentColor">39</div><div class="t" style="left:318.02px;top:214.68px;width:46.67px;text-align:right;font-size:10.6px;transform:scaleX(0.9);transform-origin:100% 0;color:#2a2a2a;letter-spacing:-0.2px;-webkit-text-stroke:0.05px currentColor">40</div><div class="t" style="left:367.19px;top:214.68px;width:46.67px;text-align:right;font-size:10.6px;transform:scaleX(0.9);transform-origin:100% 0;color:#2a2a2a;letter-spacing:-0.2px;-webkit-text-stroke:0.05px currentColor">41</div><div class="t" style="left:23.00px;top:226.94px;width:46.67px;text-align:right;font-size:10.6px;transform:scaleX(0.9);transform-origin:100% 0;color:#2a2a2a;letter-spacing:-0.2px;-webkit-text-stroke:0.05px currentColor">35</div><div class="t" style="left:72.17px;top:226.94px;width:46.67px;text-align:right;font-size:10.6px;transform:scaleX(0.9);transform-origin:100% 0;color:#2a2a2a;letter-spacing:-0.2px;-webkit-text-stroke:0.05px currentColor">36</div><div class="t" style="left:121.34px;top:226.94px;width:46.67px;text-align:right;font-size:10.6px;transform:scaleX(0.9);transform-origin:100% 0;color:#2a2a2a;letter-spacing:-0.2px;-webkit-text-stroke:0.05px currentColor">37</div><div class="t" style="left:170.51px;top:226.94px;width:46.67px;text-align:right;font-size:10.6px;transform:scaleX(0.9);transform-origin:100% 0;color:#2a2a2a;letter-spacing:-0.2px;-webkit-text-stroke:0.05px currentColor">38</div><div class="t" style="left:219.68px;top:226.94px;width:46.67px;text-align:right;font-size:10.6px;transform:scaleX(0.9);transform-origin:100% 0;color:#2a2a2a;letter-spacing:-0.2px;-webkit-text-stroke:0.05px currentColor">39</div><div class="t" style="left:268.85px;top:226.94px;width:46.67px;text-align:right;font-size:10.6px;transform:scaleX(0.9);transform-origin:100% 0;color:#2a2a2a;letter-spacing:-0.2px;-webkit-text-stroke:0.05px currentColor">40</div><div class="t" style="left:318.02px;top:226.94px;width:46.67px;text-align:right;font-size:10.6px;transform:scaleX(0.9);transform-origin:100% 0;color:#2a2a2a;letter-spacing:-0.2px;-webkit-text-stroke:0.05px currentColor">41</div><div class="t" style="left:367.19px;top:226.94px;width:46.67px;text-align:right;font-size:10.6px;transform:scaleX(0.9);transform-origin:100% 0;color:#2a2a2a;letter-spacing:-0.2px;-webkit-text-stroke:0.05px currentColor">42</div><div class="t" style="left:23.00px;top:239.20px;width:46.67px;text-align:right;font-size:10.6px;transform:scaleX(0.9);transform-origin:100% 0;color:#2a2a2a;letter-spacing:-0.2px;-webkit-text-stroke:0.05px currentColor">36</div><div class="t" style="left:72.17px;top:239.20px;width:46.67px;text-align:right;font-size:10.6px;transform:scaleX(0.9);transform-origin:100% 0;color:#2a2a2a;letter-spacing:-0.2px;-webkit-text-stroke:0.05px currentColor">37</div><div class="t" style="left:121.34px;top:239.20px;width:46.67px;text-align:right;font-size:10.6px;transform:scaleX(0.9);transform-origin:100% 0;color:#2a2a2a;letter-spacing:-0.2px;-webkit-text-stroke:0.05px currentColor">38</div><div class="t" style="left:170.51px;top:239.20px;width:46.67px;text-align:right;font-size:10.6px;transform:scaleX(0.9);transform-origin:100% 0;color:#2a2a2a;letter-spacing:-0.2px;-webkit-text-stroke:0.05px currentColor">39</div><div class="t" style="left:219.68px;top:239.20px;width:46.67px;text-align:right;font-size:10.6px;transform:scaleX(0.9);transform-origin:100% 0;color:#2a2a2a;letter-spacing:-0.2px;-webkit-text-stroke:0.05px currentColor">40</div><div class="t" style="left:268.85px;top:239.20px;width:46.67px;text-align:right;font-size:10.6px;transform:scaleX(0.9);transform-origin:100% 0;color:#2a2a2a;letter-spacing:-0.2px;-webkit-text-stroke:0.05px currentColor">41</div><div class="t" style="left:318.02px;top:239.20px;width:46.67px;text-align:right;font-size:10.6px;transform:scaleX(0.9);transform-origin:100% 0;color:#2a2a2a;letter-spacing:-0.2px;-webkit-text-stroke:0.05px currentColor">42</div><div class="t" style="left:367.19px;top:239.20px;width:46.67px;text-align:right;font-size:10.6px;transform:scaleX(0.9);transform-origin:100% 0;color:#2a2a2a;letter-spacing:-0.2px;-webkit-text-stroke:0.05px currentColor">43</div><div class="t" style="left:23.00px;top:251.46px;width:46.67px;text-align:right;font-size:10.6px;transform:scaleX(0.9);transform-origin:100% 0;color:#2a2a2a;letter-spacing:-0.2px;-webkit-text-stroke:0.05px currentColor">37</div><div class="t" style="left:72.17px;top:251.46px;width:46.67px;text-align:right;font-size:10.6px;transform:scaleX(0.9);transform-origin:100% 0;color:#2a2a2a;letter-spacing:-0.2px;-webkit-text-stroke:0.05px currentColor">38</div><div class="t" style="left:121.34px;top:251.46px;width:46.67px;text-align:right;font-size:10.6px;transform:scaleX(0.9);transform-origin:100% 0;color:#2a2a2a;letter-spacing:-0.2px;-webkit-text-stroke:0.05px currentColor">39</div><div class="t" style="left:170.51px;top:251.46px;width:46.67px;text-align:right;font-size:10.6px;transform:scaleX(0.9);transform-origin:100% 0;color:#2a2a2a;letter-spacing:-0.2px;-webkit-text-stroke:0.05px currentColor">40</div><div class="t" style="left:219.68px;top:251.46px;width:46.67px;text-align:right;font-size:10.6px;transform:scaleX(0.9);transform-origin:100% 0;color:#2a2a2a;letter-spacing:-0.2px;-webkit-text-stroke:0.05px currentColor">41</div><div class="t" style="left:268.85px;top:251.46px;width:46.67px;text-align:right;font-size:10.6px;transform:scaleX(0.9);transform-origin:100% 0;color:#2a2a2a;letter-spacing:-0.2px;-webkit-text-stroke:0.05px currentColor">42</div><div class="t" style="left:318.02px;top:251.46px;width:46.67px;text-align:right;font-size:10.6px;transform:scaleX(0.9);transform-origin:100% 0;color:#2a2a2a;letter-spacing:-0.2px;-webkit-text-stroke:0.05px currentColor">43</div><div class="t" style="left:367.19px;top:251.46px;width:46.67px;text-align:right;font-size:10.6px;transform:scaleX(0.9);transform-origin:100% 0;color:#2a2a2a;letter-spacing:-0.2px;-webkit-text-stroke:0.05px currentColor">44</div><div class="t" style="left:23.00px;top:263.72px;width:46.67px;text-align:right;font-size:10.6px;transform:scaleX(0.9);transform-origin:100% 0;color:#2a2a2a;letter-spacing:-0.2px;-webkit-text-stroke:0.05px currentColor">38</div><div class="t" style="left:72.17px;top:263.72px;width:46.67px;text-align:right;font-size:10.6px;transform:scaleX(0.9);transform-origin:100% 0;color:#2a2a2a;letter-spacing:-0.2px;-webkit-text-stroke:0.05px currentColor">39</div><div class="t" style="left:121.34px;top:263.72px;width:46.67px;text-align:right;font-size:10.6px;transform:scaleX(0.9);transform-origin:100% 0;color:#2a2a2a;letter-spacing:-0.2px;-webkit-text-stroke:0.05px currentColor">40</div><div class="t" style="left:170.51px;top:263.72px;width:46.67px;text-align:right;font-size:10.6px;transform:scaleX(0.9);transform-origin:100% 0;color:#2a2a2a;letter-spacing:-0.2px;-webkit-text-stroke:0.05px currentColor">41</div><div class="t" style="left:219.68px;top:263.72px;width:46.67px;text-align:right;font-size:10.6px;transform:scaleX(0.9);transform-origin:100% 0;color:#2a2a2a;letter-spacing:-0.2px;-webkit-text-stroke:0.05px currentColor">42</div><div class="t" style="left:268.85px;top:263.72px;width:46.67px;text-align:right;font-size:10.6px;transform:scaleX(0.9);transform-origin:100% 0;color:#2a2a2a;letter-spacing:-0.2px;-webkit-text-stroke:0.05px currentColor">43</div><div class="t" style="left:318.02px;top:263.72px;width:46.67px;text-align:right;font-size:10.6px;transform:scaleX(0.9);transform-origin:100% 0;color:#2a2a2a;letter-spacing:-0.2px;-webkit-text-stroke:0.05px currentColor">44</div><div class="t" style="left:367.19px;top:263.72px;width:46.67px;text-align:right;font-size:10.6px;transform:scaleX(0.9);transform-origin:100% 0;color:#2a2a2a;letter-spacing:-0.2px;-webkit-text-stroke:0.05px currentColor">45</div><div class="t" style="left:23.00px;top:275.98px;width:46.67px;text-align:right;font-size:10.6px;transform:scaleX(0.9);transform-origin:100% 0;color:#2a2a2a;letter-spacing:-0.2px;-webkit-text-stroke:0.05px currentColor">39</div><div class="t" style="left:72.17px;top:275.98px;width:46.67px;text-align:right;font-size:10.6px;transform:scaleX(0.9);transform-origin:100% 0;color:#2a2a2a;letter-spacing:-0.2px;-webkit-text-stroke:0.05px currentColor">40</div><div class="t" style="left:121.34px;top:275.98px;width:46.67px;text-align:right;font-size:10.6px;transform:scaleX(0.9);transform-origin:100% 0;color:#2a2a2a;letter-spacing:-0.2px;-webkit-text-stroke:0.05px currentColor">41</div><div class="t" style="left:170.51px;top:275.98px;width:46.67px;text-align:right;font-size:10.6px;transform:scaleX(0.9);transform-origin:100% 0;color:#2a2a2a;letter-spacing:-0.2px;-webkit-text-stroke:0.05px currentColor">42</div><div class="t" style="left:219.68px;top:275.98px;width:46.67px;text-align:right;font-size:10.6px;transform:scaleX(0.9);transform-origin:100% 0;color:#2a2a2a;letter-spacing:-0.2px;-webkit-text-stroke:0.05px currentColor">43</div><div class="t" style="left:268.85px;top:275.98px;width:46.67px;text-align:right;font-size:10.6px;transform:scaleX(0.9);transform-origin:100% 0;color:#2a2a2a;letter-spacing:-0.2px;-webkit-text-stroke:0.05px currentColor">44</div><div class="t" style="left:318.02px;top:275.98px;width:46.67px;text-align:right;font-size:10.6px;transform:scaleX(0.9);transform-origin:100% 0;color:#2a2a2a;letter-spacing:-0.2px;-webkit-text-stroke:0.05px currentColor">45</div><div class="t" style="left:367.19px;top:275.98px;width:46.67px;text-align:right;font-size:10.6px;transform:scaleX(0.9);transform-origin:100% 0;color:#2a2a2a;letter-spacing:-0.2px;-webkit-text-stroke:0.05px currentColor">46</div><div class="a" style="left:169.51px;top:150.38px;width:247.85px;height:87.82px;border:2px solid #2bb274"></div><div class="a" style="left:170.51px;top:112.7px;width:245.85000000000002px;height:2px;background:#2bb274;"></div><div class="a" style="left:21px;top:151.38px;width:2px;height:85.82px;background:#2bb274;"></div><div class="a" style="left:297.7px;top:157.7px;width:224.5px;height:36.3px;background:#fff;box-shadow:0 0 2px rgba(0,0,0,0.25)"></div><div class="a" style="left:300px;top:159px;width:100.5px;height:16px;background:#fff;border-right:1px solid #eee"></div><div class="a" style="left:351.5px;top:160px;width:1px;height:14px;background:#e6e6e6;"></div><div class="t" style="left:301px;top:163.3px;font-size:8.3px;color:#2b2b2b;">宋体</div><div class="t" style="left:354px;top:163px;font-size:9.5px;color:#333;-webkit-text-stroke:0">11</div><div class="a" style="left:376.7px;top:177px;width:21px;height:15px;background:#dcdde0;"></div><div class="t" style="left:319px;top:180px;font-size:11px;color:#333;font-weight:bold">B</div><div class="t" style="left:447.3px;top:183px;font-size:8.1px;color:#2b2b2b;">合并</div><div class="t" style="left:478px;top:183px;font-size:8.1px;color:#2b2b2b;">自动求和</div><svg style="left:0;top:0" width="600" height="450" fill="none" stroke="#4a4a4a" stroke-width="1"><path d="M346.2 165.8l1.8 1.8 1.8-1.8z M393.7 165.8l1.8 1.8 1.8-1.8z M348.2 184.3l1.8 1.8 1.8-1.8z M371.2 184.3l1.8 1.8 1.8-1.8z M393.2 184.3l1.8 1.8 1.8-1.8z M415.7 184.3l1.8 1.8 1.8-1.8z M466.2 185.3l1.8 1.8 1.8-1.8z M512.2 185.3l1.8 1.8 1.8-1.8z" fill="#555" stroke="none"/><path d="M400.5 159.5v16 M299 175.5h101" stroke="#ececec"/><path d="M440.5 161v31" stroke="#eaeaea"/><path d="M403.5 171.5l4-9 4 9 M405 168h5 M411 163.5h3M412.5 162v3" /><path d="M421.5 171.5l4-9 4 9 M423 168h5 M429.5 163h3" /><path d="M301.5 183v-2.5h3 M309 180.5h3v2.5 M301.5 187v2.5h3 M309 189.5h3v-2.5 M304 183h5 M304 185h5c1 0 1 2.5 0 2.5h-3 M307 186.5l-1 1 1 1" /><path d="M335 184.5l4.5-4.5 4.5 4.5-2.5 2.5h-4z" fill="#e4e4e4"/><path d="M337.3 182.2l-1.3-2.7h2.5" /><rect x="334" y="187.6" width="11" height="2.4" fill="#f3e62b" stroke="none"/><path d="M357.5 187l4-9 4 9 M359 184h5" /><rect x="356.5" y="188" width="10.5" height="2.2" fill="#e8262a" stroke="none"/><path d="M380 183h10 M380 186h10 M381 189h8" stroke="#555"/><path d="M401.5 180.5h9.5v9.5h-9.5z M406.25 180.5v9.5 M401.5 185.25h9.5" /><path d="M427.5 179.5h2v4h3v3.5h-8v-3.5h3z M424.5 187h8v4h-8z" /><path d="M450.5 162.5h15v12.5h-15z M450.5 166h15 M455.5 162.5v3.5M460.5 162.5v3.5 M453 171h10 M454.5 169.5l-1.5 1.5 1.5 1.5M461.5 169.5l1.5 1.5-1.5 1.5" /><path d="M501.5 163v-0.5h-11l5.5 6.5-5.5 6.5h11v-0.5" stroke-linejoin="miter"/></svg><div class="a" style="left:295px;top:207px;width:173px;height:260px;background:#fff;box-shadow:0 0 2px rgba(0,0,0,0.2)"></div><div class="t" style="left:317.5px;top:212.7px;font-size:8.1px;color:#333;">复制<span style="font-size:9.3px">(C)</span></div><div class="t" style="left:431px;top:212.5px;font-size:9px;color:#999;-webkit-text-stroke:0">Ctrl+C</div><div class="t" style="left:317.5px;top:231.7px;font-size:8.1px;color:#333;">剪切<span style="font-size:9.3px">(T)</span></div><div class="t" style="left:431px;top:231.5px;font-size:9px;color:#999;-webkit-text-stroke:0">Ctrl+X</div><div class="t" style="left:317.5px;top:250.7px;font-size:8.1px;color:#333;">粘贴<span style="font-size:9.3px">(P)</span></div><div class="t" style="left:317.5px;top:269.7px;font-size:8.1px;color:#333;">选择性粘贴<span style="font-size:9.3px">(S)...</span></div><div class="t" style="left:317.5px;top:294.7px;font-size:8.1px;color:#333;">格式刷<span style="font-size:9.3px">(O)</span></div><div class="t" style="left:317.5px;top:320.2px;font-size:8.1px;color:#333;">插入<span style="font-size:9.3px">(I)</span></div><div class="t" style="left:317.5px;top:339.2px;font-size:8.1px;color:#333;">插入图表</div><div class="t" style="left:317.5px;top:357.7px;font-size:8.1px;color:#333;">删除<span style="font-size:9.3px">(D)</span></div><div class="t" style="left:317.5px;top:376.7px;font-size:8.1px;color:#333;">清除内容<span style="font-size:9.3px">(N)</span></div><div class="t" style="left:317.5px;top:401.2px;font-size:8.1px;color:#333;">筛选<span style="font-size:9.3px">(L)</span></div><div class="t" style="left:317.5px;top:420.2px;font-size:8.1px;color:#333;">排序<span style="font-size:9.3px">(U)</span></div><div class="t" style="left:317.5px;top:445.7px;font-size:8.1px;color:#333;">插入批注<span style="font-size:9.3px">(M)</span></div><div class="t" style="left:424px;top:445.5px;font-size:9px;color:#999;-webkit-text-stroke:0">Shift+F2</div><div class="a" style="left:295px;top:286px;width:173px;height:1px;background:#ececec;"></div><div class="a" style="left:295px;top:311.5px;width:173px;height:1px;background:#ececec;"></div><div class="a" style="left:295px;top:393.3px;width:173px;height:1px;background:#ececec;"></div><div class="a" style="left:295px;top:437.5px;width:173px;height:1px;background:#ececec;"></div><svg style="left:0;top:0" width="600" height="450" fill="none" stroke="#4a4a4a" stroke-width="1"><path d="M303.5 211.5h7v7.5h-7z M303.5 214h-3v8h8v-3" /><path d="M301 230l9 7.5 M310 230l-9 7.5 M302.5 239m-1.5 0a1.5 1.5 0 1 0 3 0a1.5 1.5 0 1 0-3 0 M308.5 239m-1.5 0a1.5 1.5 0 1 0 3 0a1.5 1.5 0 1 0-3 0" /><path d="M301.5 251.5h2M308.5 251.5h2v2 M301.5 251.5v7h3 M303.5 250.5h5v2h-5z M305 254h6v5.5h-6z" /><path d="M301.5 269.5h2M308.5 269.5h2v2.5 M301.5 269.5v9h9v-2.5 M303.5 268.5h5v2h-5z M307 274.5h4.5" /><path d="M305 291.5h2v4h3v3.5h-8v-3.5h3z M302 299h8v5h-8z" /><path d="M301.5 320h6v3h-6z M303.5 326.5h6v3h-6z M305 323v3.5 M307.5 321.5h3 M309.5 320.5l1 1-1 1" /><path d="M301.5 348v-5h2v5 M304.5 348v-7h2v7 M307.5 348v-9h2v9 M300.5 348.5h10" /><path d="M303.5 376v3l-2 3v4h7v-4l-2-3v-3z M309 383l3 3M312 383l-3 3" /><path d="M300.5 401h11l-4.5 5v5l-2 -1v-4z" /><path d="M303.5 421l-3 8h6z M302 425.5h3 M309.5 420v9 M308 427.5l1.5 1.5 1.5-1.5 M300.5 430.5h7" /><path d="M300.5 446v-2h7 M309.5 443v5 M307 445.5h5 M300.5 446v6" /><path d="M455.5 251h2M460.5 251h2v8.5h-7v-8.5 M457.5 250h3v2h-3z M457 259l2-5 2 5 M457.8 257h2.4" /><path d="M446.5 249v12 M453.5 377v9 M453.5 401v9 M453.5 420v9" stroke="#e4e4e4"/><path d="M456 291.5v3 M459 292v3 M455 296h7v4h-7z" /><path d="M460.5 322.5l2.5 2-2.5 2z M460.5 360l2.5 2-2.5 2z M460.5 379l2.5 2-2.5 2z M460.5 403.5l2.5 2-2.5 2z M460.5 422.5l2.5 2-2.5 2z" fill="#666" stroke="none"/></svg><svg style="left:0;top:0" width="600" height="450"><line x1="541.3" y1="384.4" x2="385" y2="246" stroke="#f86f3d" stroke-width="15.5" stroke-linecap="round"/><path d="M352.8 218.2L438 235L387.8 238.5L377.3 251.3L379.7 298z" fill="#f86f3d"/></svg></div></body></html>
